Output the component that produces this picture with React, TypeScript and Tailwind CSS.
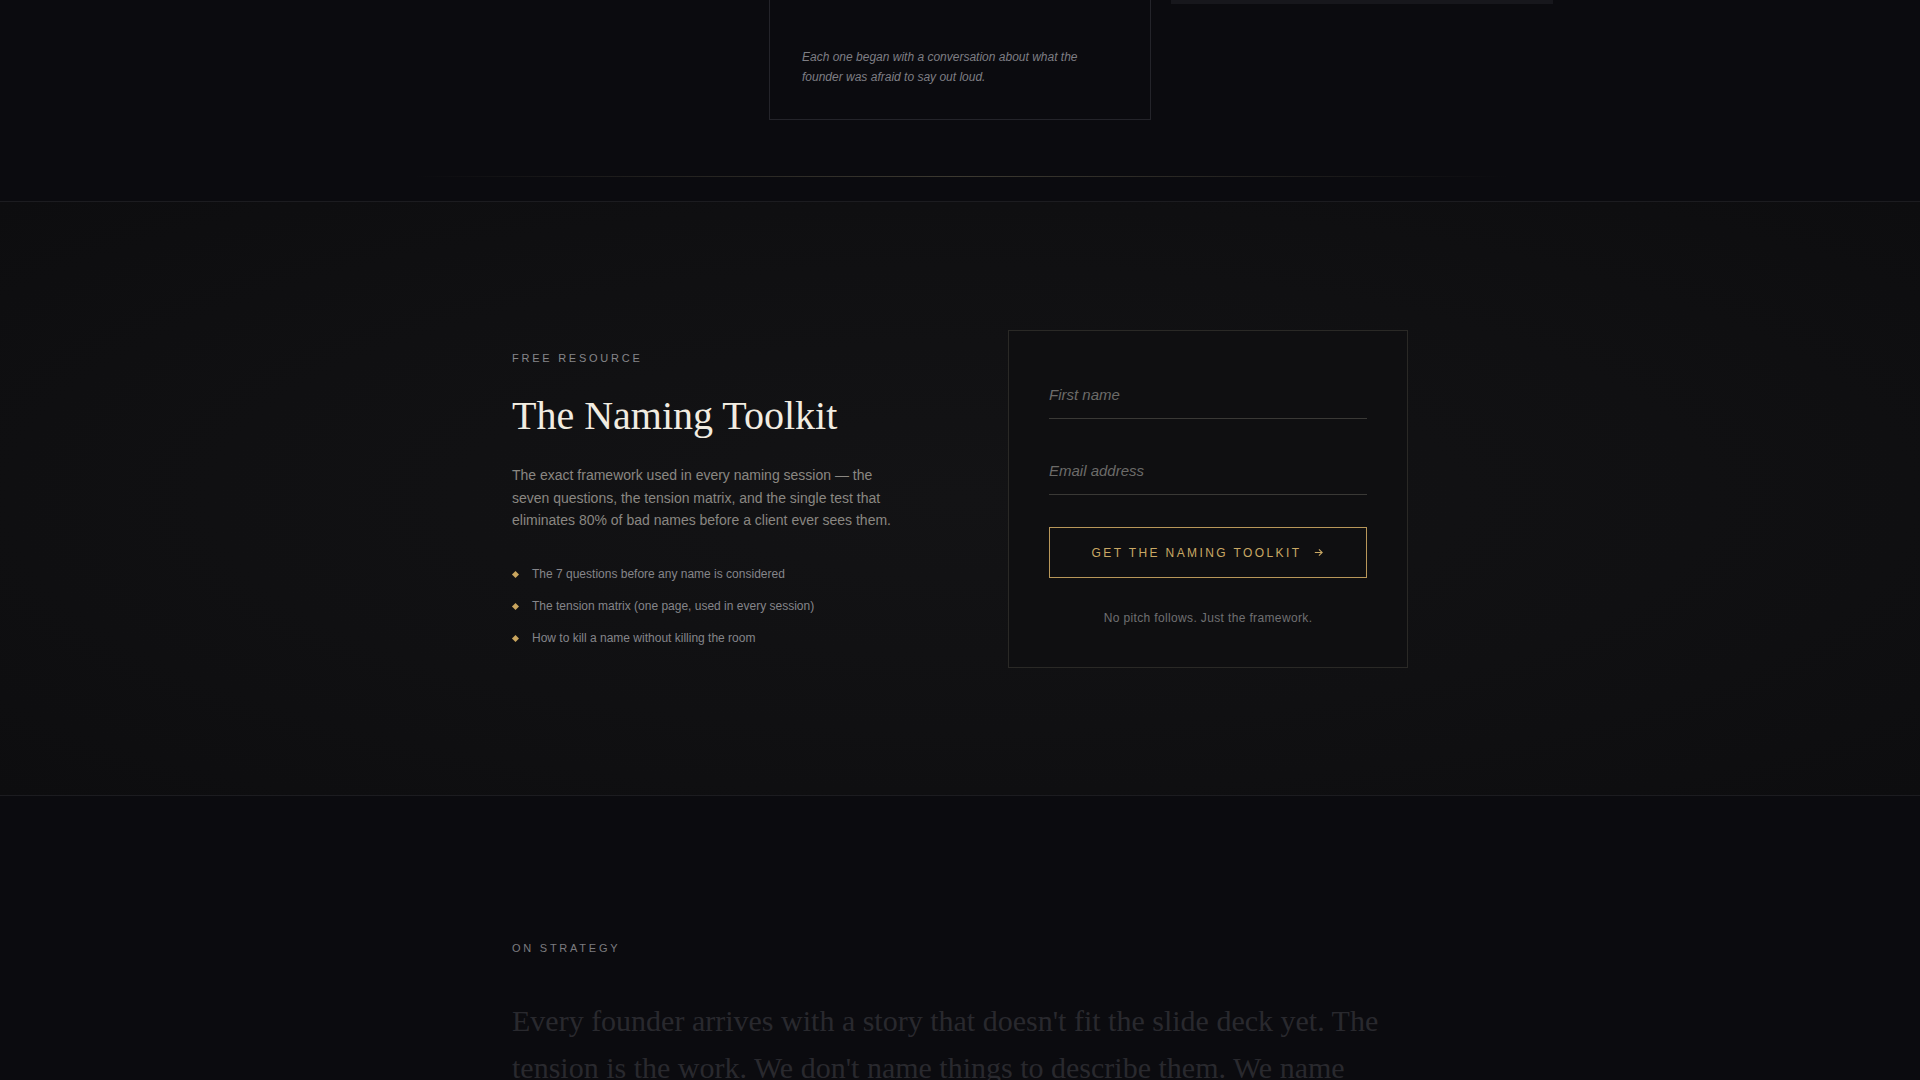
import React, { useState } from 'react';

const perks = [
  'The 7 questions before any name is considered',
  'The tension matrix (one page, used in every session)',
  'How to kill a name without killing the room',
];

export default function App() {
  const [form, setForm] = useState({ first_name: '', email: '' });

  const handleChange = (e: React.ChangeEvent<HTMLInputElement>) => {
    setForm({ ...form, [e.target.name]: e.target.value });
  };

  return (
    <div className="min-h-screen bg-[#0b0b0f] font-['Liberation_Sans',Arial,sans-serif] text-[#e9e4d8]">
      {/* Tail end of the case grid */}
      <section className="bg-[#0b0b0f]">
        <div className="mx-auto grid w-[1186px] grid-cols-3 gap-5 items-start">
          <div />
          <div className="border-x border-b border-[#24242a] px-8 pb-8 pt-[47px]">
            <p className="text-[12px] italic leading-5 text-[#7e7e84]">
              Each one began with a conversation about what the founder was afraid to say out loud.
            </p>
          </div>
          <div className="h-1 bg-[#17171c]" />
        </div>
        <div className="mx-auto mt-[56px] h-px w-[1094px] bg-gradient-to-r from-transparent via-[#3d3a31] to-transparent" />
        <div className="h-6" />
      </section>

      {/* Free resource */}
      <section className="border-y border-[#1c1c20] bg-[radial-gradient(ellipse_at_center,#131315_0%,#101012_55%,#0d0d0f_100%)] pb-[127px] pt-32">
        <div className="mx-auto grid max-w-[896px] grid-cols-2 items-center gap-24">
          <div>
            <span className="block text-[11px] uppercase leading-4 tracking-[0.25em] text-[#86868a]">Free Resource</span>
            <h2 className="mt-[26px] font-['Liberation_Serif','Times_New_Roman',serif] text-[40px] leading-[48px] text-[#f1ece1]">
              The Naming Toolkit
            </h2>
            <p className="mt-6 max-w-[400px] text-[14px] leading-[22.75px] text-[#8a8782]">
              The exact framework used in every naming session — the seven questions, the tension matrix, and the single test that eliminates 80% of bad names before a client ever sees them.
            </p>
            <ul className="mt-8 flex flex-col gap-3">
              {perks.map((perk) => (
                <li key={perk} className="flex items-center gap-3 text-[12px] leading-5 text-[#85858a]">
                  <span className="ml-[1px] h-[5px] w-[5px] rotate-45 bg-[#c9a55e]" />
                  <span className="ml-[2px]">{perk}</span>
                </li>
              ))}
            </ul>
          </div>

          <form
            onSubmit={(e) => e.preventDefault()}
            className="flex flex-col border border-[#2a2926] bg-[#0f0f11] p-10"
          >
            <input
              name="first_name"
              value={form.first_name}
              onChange={handleChange}
              placeholder="First name"
              className="h-12 border-b border-[#3a3936] bg-transparent text-[15px] italic text-[#d8d3c8] outline-none placeholder:text-[#6c6b69] focus:border-[#c9a55e]"
            />
            <input
              name="email"
              type="email"
              value={form.email}
              onChange={handleChange}
              placeholder="Email address"
              className="mt-7 h-12 border-b border-[#3a3936] bg-transparent text-[15px] italic text-[#d8d3c8] outline-none placeholder:text-[#6c6b69] focus:border-[#c9a55e]"
            />
            <button
              type="submit"
              className="mt-8 flex h-[51px] items-center justify-center gap-3 border border-[#b8975a] text-[12px] uppercase tracking-[0.2em] text-[#c9a864] transition-colors hover:bg-[#c9a55e]/10"
            >
              <span>Get the Naming Toolkit</span>
              <svg width="11" height="11" viewBox="0 0 12 12" fill="none" stroke="currentColor" strokeWidth="1.2">
                <path d="M2 6h8M6.5 2.5L10 6l-3.5 3.5" />
              </svg>
            </button>
            <p className="mt-[31px] text-center text-[12px] leading-[18px] tracking-[0.03em] text-[#6f6f72]">
              No pitch follows. Just the framework.
            </p>
          </form>
        </div>
      </section>

      {/* On strategy */}
      <section className="bg-[#0b0b0f] pb-32 pt-[144px]">
        <div className="mx-auto max-w-[896px]">
          <span className="block text-[11px] uppercase leading-4 tracking-[0.25em] text-[#7c7c80]">On Strategy</span>
          <p className="mt-[41px] font-['Liberation_Serif','Times_New_Roman',serif] text-[30px] leading-[47px] text-[#29292e]">
            Every founder arrives with a story that doesn't fit the slide deck yet. The tension is the work. We don't name things to describe them. We name them so they have something to grow into.
          </p>
        </div>
      </section>
    </div>
  );
}
